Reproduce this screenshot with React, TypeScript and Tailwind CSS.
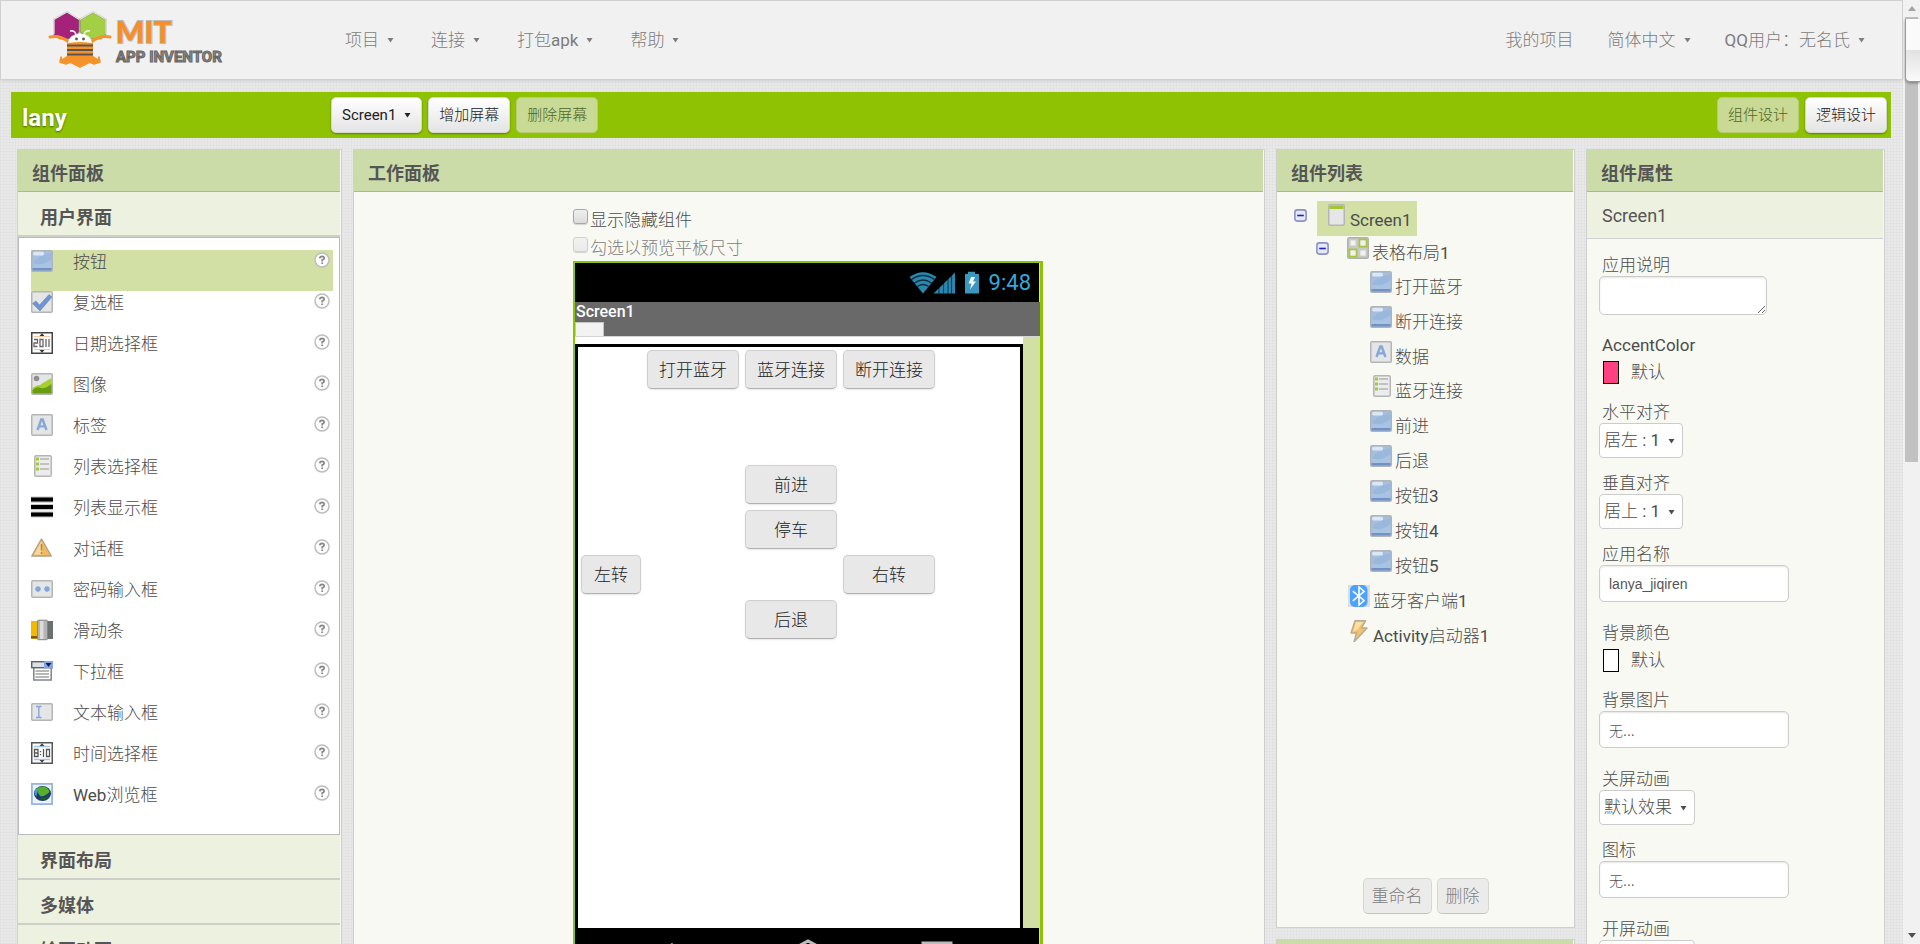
import React, { useState } from 'react';

type IconName =
  | 'button' | 'check' | 'date' | 'image' | 'label' | 'picker' | 'listview' | 'notifier'
  | 'password' | 'slider' | 'spinner' | 'textbox' | 'time' | 'web' | 'screen' | 'table'
  | 'bluetooth' | 'activity';

const Tile = ({ y = 0, h = 22 }: { y?: number; h?: number }) => (
  <rect x="0.75" y={y + 0.75} width="20.5" height={h - 1.5} rx="1" fill="#e4e5e7" stroke="#b5b5b5" strokeWidth="1.5" />
);

const glyphs: Record<IconName, React.ReactNode> = {
  button: (
    <>
      <rect x="0.75" y="0.75" width="20.5" height="20.5" rx="1.5" fill="#a5bfe0" stroke="#b0b3b8" strokeWidth="1.5" />
      <path d="M1.5 14 Q4 7 20.5 3 V18.5 H1.5 Z" fill="#9ab7dc" />
      <path d="M1.5 18.5 V13 Q11 17 20.5 9 V18.5 Z" fill="#a9c3e3" />
      <rect x="1.5" y="18" width="19" height="2.5" fill="#7192c7" />
      <rect x="2" y="1.8" width="11" height="3.6" rx="1.6" fill="#dce7f5" />
    </>
  ),
  check: (
    <>
      <Tile />
      <path d="M1.5 12.5 L5 10 L8.5 14 L18 3.5 L21 6 L9 20 Z" fill="#6f94d0" stroke="#5f83c0" strokeWidth="0.5" />
    </>
  ),
  date: (
    <>
      <rect x="0.75" y="0.75" width="20.5" height="20.5" fill="#fff" stroke="#444" strokeWidth="1.5" />
      <path d="M3 4.5 H19 M3 17.5 H19" stroke="#f5c89c" strokeWidth="1.2" />
      <path d="M11 1.2 L13.5 4 H8.5 Z M11 20.8 L13.5 18 H8.5 Z" fill="#333" />
      <path d="M3 7.5 H6.5 V11 H3 V14.5 H6.5 M9 7.5 H12 V14.5 H9 Z M15 7 V15 M18 7 V15" fill="none" stroke="#666" strokeWidth="1.3" />
    </>
  ),
  image: (
    <>
      <Tile />
      <path d="M1.5 15 Q5 12 9 12 Q13 9 20.5 5 V20.5 H1.5 Z" fill="#a4d030" />
      <path d="M1.5 17 Q6 13 10 15 Q15 16 20.5 11 V20.5 H1.5 Z" fill="#6a9c12" />
      <circle cx="5.5" cy="5.5" r="2.8" fill="#8f8f8f" />
    </>
  ),
  label: (
    <>
      <Tile />
      <path d="M6.5 16 L10.3 5.5 H11.7 L15.5 16 M8 12.4 H14" fill="none" stroke="#86a7d8" strokeWidth="2.4" />
    </>
  ),
  picker: (
    <>
      <rect x="3.75" y="0.75" width="16.5" height="20.5" rx="1.5" fill="#ececec" stroke="#b5b5b5" strokeWidth="1.5" />
      <path d="M9 4 H18 M9 9 H18 M9 14 H18" stroke="#b3b3b3" strokeWidth="1.6" />
      <path d="M5 4 H8 M5 9 H8 M5 14 H8" stroke="#a2c93a" strokeWidth="3" />
    </>
  ),
  listview: (
    <>
      <rect width="22" height="21" y="0.5" fill="#c6c6c6" />
      <path d="M0 3.5 H22 M0 11 H22 M0 18.5 H22" stroke="#000" strokeWidth="4.2" />
      <path d="M0 7.3 H22 M0 14.8 H22" stroke="#fff" strokeWidth="1.3" />
    </>
  ),
  notifier: (
    <>
      <path d="M10.5 2 L20.3 19 H0.8 Z" fill="#f0bb60" stroke="#b3a085" strokeWidth="1.4" strokeLinejoin="round" />
      <path d="M10.5 4 L3 17.8 H10.5 Z" fill="#f7d7a0" />
      <path d="M10.5 7 V13.5 M10.5 15 V17" stroke="#b08a4a" strokeWidth="1.5" />
    </>
  ),
  password: (
    <>
      <Tile y={2} h={18} />
      <path d="M4 11 H10 M7 8 V14 M5 9 L9 13 M9 9 L5 13 M13 11 H19 M16 8 V14 M14 9 L18 13 M18 9 L14 13" stroke="#83a6da" strokeWidth="1.4" />
    </>
  ),
  slider: (
    <>
      <rect x="0" y="2" width="7" height="18" fill="#f5b800" />
      <rect x="0" y="17" width="7" height="2.5" fill="#7a5b10" />
      <rect x="16" y="2" width="6" height="18" fill="#6b7070" />
      <rect x="6.5" y="1.2" width="10" height="19.5" rx="1" fill="#b4b4b4" stroke="#858585" />
      <rect x="9" y="2" width="3.5" height="18" fill="#dcdcdc" />
    </>
  ),
  spinner: (
    <>
      <rect x="2.8" y="7" width="17.4" height="13" fill="#fff" stroke="#858b96" strokeWidth="1.6" />
      <path d="M4.5 11 H18 M4.5 14 H18 M4.5 17 H18" stroke="#a0a0a0" strokeWidth="1.4" />
      <rect x="0.7" y="1.7" width="20.6" height="6" fill="#dcdfe4" stroke="#5d6269" strokeWidth="1.4" />
      <rect x="13" y="1" width="9" height="7.4" fill="#86a5e6" />
      <path d="M14.5 3 H20.5 L17.5 7 Z" fill="#10204a" />
    </>
  ),
  textbox: (
    <>
      <Tile y={2} h={18} />
      <path d="M5 5.5 H7 L7.8 6.5 L8.6 5.5 H10.5 M7.8 6 V16 M5 16.5 H7 L7.8 15.5 L8.6 16.5 H10.5" fill="none" stroke="#86a5d8" strokeWidth="1.4" />
    </>
  ),
  time: (
    <>
      <rect x="0.75" y="0.75" width="20.5" height="20.5" fill="#fff" stroke="#555" strokeWidth="1.5" />
      <path d="M3 4.5 H19 M3 17.5 H19" stroke="#9fc4e6" strokeWidth="1.4" />
      <path d="M11 1.2 L13.5 4 H8.5 Z M11 20.8 L13.5 18 H8.5 Z" fill="#444" />
      <path d="M3.5 7.5 H7 V14.5 H3.5 Z M3.5 11 H7 M9.5 9 V10.2 M9.5 12 V13.2 M12.5 7 V15 M15.5 7.5 H18.5 V14.5 H15.5 Z" fill="none" stroke="#555" strokeWidth="1.3" />
    </>
  ),
  web: (
    <>
      <rect x="0.9" y="0.9" width="20.2" height="20.2" fill="#eef3fa" stroke="#98b5de" strokeWidth="1.8" />
      <ellipse cx="11.5" cy="10.5" rx="8.5" ry="7.5" fill="#1c3c6e" />
      <path d="M5 6 Q8 3 13 3.5 Q18 5 18.5 9 Q14 14 9 13 Q7 10 5 6 Z" fill="#55b02c" />
      <path d="M3.2 9 Q4 6 6 5 Q7 9 5.5 13 Q3.5 12 3.2 9 Z" fill="#4d90dd" />
      <path d="M9 14 Q14 16 18 12 Q16 17 11 17.5 Z" fill="#1f5a22" />
    </>
  ),
  screen: (
    <>
      <rect x="3.75" y="0.75" width="15.5" height="20.5" rx="1.2" fill="#e6e6e6" stroke="#b5b5b5" strokeWidth="1.5" />
      <rect x="4.5" y="1.5" width="14" height="3.5" fill="#a3c62c" />
    </>
  ),
  table: (
    <>
      <rect x="0.75" y="0.75" width="20.5" height="20.5" rx="1.5" fill="#c9c9c9" stroke="#b0b0b0" strokeWidth="1.5" />
      <rect x="11.5" y="1.5" width="9" height="9" fill="#a7c640" />
      <rect x="1.5" y="11.5" width="9" height="9" fill="#a7c640" />
      <path d="M3.7 3.7 H8.3 V8.3 H3.7 Z M13.7 3.7 H18.3 V8.3 H13.7 Z M3.7 13.7 H8.3 V18.3 H3.7 Z M13.7 13.7 H18.3 V18.3 H13.7 Z" fill="#f4f4ee" stroke="#e4e4e4" />
    </>
  ),
  bluetooth: (
    <>
      <rect width="22" height="22" fill="#dcdcdc" />
      <rect x="2" width="17.5" height="22" rx="5" fill="#4ba3ff" />
      <path d="M4.8 6.2 L16 15.5 L11 20 V2 L16 6.5 L4.8 15.8" fill="none" stroke="#fff" strokeWidth="1.6" />
    </>
  ),
  activity: (
    <>
      <path d="M7 0.8 H17.5 L13.5 8 H19 L6 22 L8.5 13 H3 Z" fill="#f5c266" stroke="#b9aa92" strokeWidth="1.4" strokeLinejoin="round" />
      <path d="M8 2 H15 L10 9 L5 12 Z" fill="#fae0a6" />
    </>
  ),
};

const Icon = ({ name }: { name: IconName }) => (
  <svg viewBox="0 0 22 22" className="w-[22px] h-[22px] shrink-0" aria-hidden="true">
    {glyphs[name]}
  </svg>
);

const Caret = () => (
  <svg viewBox="0 0 7 6" className="w-[7px] h-[6px] shrink-0" aria-hidden="true">
    <path d="M0.5 1 H6.5 L3.5 5.5 Z" fill="currentColor" />
  </svg>
);

const Logo = () => (
  <svg viewBox="0 0 180 60" className="w-[180px] h-[60px]" role="img" aria-label="MIT App Inventor">
    <g stroke="#777" strokeOpacity="0.5" strokeWidth="1.5">
      <path d="M6 9.5 L19 2 L31 9.5 V22 L24 29 H12 L6 25 Z" fill="#a5227a" />
      <path d="M32 9.5 L45 2 L58 9.5 V24 L53 29 H41 L32 22 Z" fill="#a3cf45" />
    </g>
    <g fill="none" stroke="#f3efe9" strokeWidth="1.6">
      <path d="M6 24 V9.5 L19 2 L31 9.5 M32 9.5 L45 2 L58 9.5 V24" strokeWidth="1" />
      <path d="M22 21 Q28 20 28 26 M42 21 Q36 20 36 26" />
    </g>
    <path d="M2 27 Q12 25 21 32 M62 27 Q52 25 43 32" fill="none" stroke="#f6922a" strokeWidth="3" strokeLinecap="round" />
    <path d="M13 47 L14 50 L20 46 H44 L50 50 L51 47 L52 52 L46 54 L42 52 L32 57 L22 52 L18 54 L12 52 Z" fill="#f6922a" stroke="#f6922a" strokeWidth="1.5" strokeLinejoin="round" />
    <rect x="19" y="31" width="26" height="17" fill="#f6922a" />
    <path d="M19 35.5 H45 M19 40 H45 M19 44.5 H45" stroke="#5b5450" strokeWidth="2.2" />
    <path d="M20 33 Q21 24 32 24 Q43 24 44 33 Q32 31 20 33 Z" fill="#fff" />
    <circle cx="28.5" cy="29" r="1.4" fill="#555" />
    <circle cx="35.5" cy="29" r="1.4" fill="#555" />
    <text x="68" y="33" fontFamily="Lato, sans-serif" fontWeight="900" fontSize="30" fill="#f98e28" stroke="#bbb" strokeWidth="2" paintOrder="stroke">
      MIT
    </text>
    <text x="68" y="52" fontFamily="Roboto, sans-serif" fontWeight="700" fontSize="15" fill="#8a8a8a" stroke="#666" strokeWidth="1">
      APP INVENTOR
    </text>
  </svg>
);

const NavItem = ({ label, caret = true }: { label: string; caret?: boolean }) => (
  <button className="flex items-center gap-2 text-[17px] leading-6 text-[#7c7c7c]">
    {label}
    {caret && <Caret />}
  </button>
);

const BarButton = ({ children, disabled }: { children: React.ReactNode; disabled?: boolean }) => (
  <button
    disabled={disabled}
    className="h-9 px-[10px] flex items-center gap-2 rounded-[5px] border text-[15px] enabled:text-[#222] enabled:border-[#d4d8cc] enabled:bg-linear-to-b enabled:from-white enabled:to-[#e4e4e4] enabled:shadow-[0_1px_2px_rgba(0,0,0,0.35)] disabled:bg-[#c8da94] disabled:border-[#b5cc74] disabled:text-[#526428]"
  >
    {children}
  </button>
);

const Panel = ({ title, className, children }: { title: string; className: string; children?: React.ReactNode }) => (
  <section className={`bg-[#f8f9f3] border border-[#cfcfcf] flex flex-col ${className}`}>
    <h2 className="h-[42px] shrink-0 pt-1 px-[14px] mr-px font-[Roboto,'Noto_Sans_CJK_SC',sans-serif] text-lg leading-[40px] font-bold text-[#555] bg-[#ccdca9] border-b border-[#adb497]">
      {title}
    </h2>
    {children}
  </section>
);

const palette: { icon: IconName; name: string }[] = [
  { icon: 'button', name: '按钮' },
  { icon: 'check', name: '复选框' },
  { icon: 'date', name: '日期选择框' },
  { icon: 'image', name: '图像' },
  { icon: 'label', name: '标签' },
  { icon: 'picker', name: '列表选择框' },
  { icon: 'listview', name: '列表显示框' },
  { icon: 'notifier', name: '对话框' },
  { icon: 'password', name: '密码输入框' },
  { icon: 'slider', name: '滑动条' },
  { icon: 'spinner', name: '下拉框' },
  { icon: 'textbox', name: '文本输入框' },
  { icon: 'time', name: '时间选择框' },
  { icon: 'web', name: 'Web浏览框' },
];

const CategoryHeader = ({ name }: { name: string }) => (
  <button className="h-[45px] shrink-0 mr-px pl-[22px] pt-2 text-left font-[Roboto,'Noto_Sans_CJK_SC',sans-serif] text-lg font-bold text-[#555] bg-[#edf1df] border-b-2 border-[#cdcfc9]">
    {name}
  </button>
);

const HelpIcon = () => (
  <svg viewBox="0 0 16 16" className="w-4 h-4" aria-hidden="true">
    <circle cx="8" cy="8" r="7" fill="#fdfdfd" stroke="#bdbdbd" strokeWidth="1.5" />
    <path d="M5.8 6.3 Q6 4.4 8 4.4 Q10.3 4.5 10.1 6.3 Q9.9 7.5 8.2 8 V9.4 M8.2 10.4 V12" fill="none" stroke="#888" strokeWidth="1.8" />
  </svg>
);

const PalettePanel = () => (
  <Panel title="组件面板" className="w-[325px] shrink-0">
    <CategoryHeader name="用户界面" />
    <ul className="bg-white border border-[#bbb] mr-px pl-3 pr-[6px] pt-3 pb-[10px]">
      {palette.map((item, i) => (
        <li key={item.name} className={`h-[41px] flex items-start ${i === 0 ? 'bg-[#d2e0a6]' : ''}`}>
          <Icon name={item.icon} />
          <span className="ml-5 flex-1 text-[17px] leading-6 text-[#4c4c4c]">{item.name}</span>
          <button aria-label={`${item.name} 帮助`} className="mt-[2px] mr-[3px]">
            <HelpIcon />
          </button>
        </li>
      ))}
    </ul>
    <CategoryHeader name="界面布局" />
    <CategoryHeader name="多媒体" />
    <CategoryHeader name="绘图动画" />
  </Panel>
);

const MockButton = ({ label, className }: { label: string; className: string }) => (
  <button
    className={`rounded-[5px] border border-[#cfcfcf] border-b-[#b0b0b0] bg-[#e8e8e8] text-[17px] leading-6 text-[#222] shadow-[0_1px_2px_rgba(0,0,0,0.1)] ${className}`}
  >
    {label}
  </button>
);

const checkboxClass =
  'appearance-none w-[15px] h-[15px] mt-1 rounded-[3px] border border-[#a8a8a8] bg-linear-to-b from-[#efefef] to-[#dcdcdc] shadow-[0_1px_1px_rgba(0,0,0,0.15)] checked:bg-[#8fc202] disabled:border-[#d0d0d0] disabled:from-[#f2f2f2] disabled:to-[#eaeaea]';

const Phone = () => (
  <div className="bg-[#d2e0a6] border-t-2 border-l-2 border-r-3 border-[#8fc202]">
    <div className="h-[39px] mr-px bg-black flex items-center justify-end pr-2 gap-[10px]">
      <svg viewBox="0 0 70 24" className="w-[70px] h-6" aria-hidden="true">
        <path d="M14 22.5 L0.5 6 Q14 -3.5 27.5 6 Z" fill="#2a87b0" />
        <path d="M2.5 8.5 Q14 0.5 25.5 8.5 M5.5 12 Q14 6 22.5 12 M8.5 15.5 Q14 11.5 19.5 15.5" fill="none" stroke="#000" strokeOpacity="0.65" strokeWidth="1.5" />
        <path d="M24.5 22.5 L46 1.5 V22.5 Z" fill="#2a87b0" />
        <path d="M30 15 V23 M34.5 11 V23 M39 7 V23 M42.5 4 V23" stroke="#000" strokeOpacity="0.5" strokeWidth="1.2" />
        <path d="M56 3 H59 V0.8 H66 V3 H70 V22.5 H56 Z" fill="#3a97bd" />
        <path d="M62 6 H66 L64 10.5 H67 L61 18.5 L62.5 12.5 H59.5 Z" fill="#f0f8fb" />
      </svg>
      <span className="text-[22px] leading-none text-[#33a9dc]">9:48</span>
    </div>
    <div className="h-[35px] bg-[#696969] border-b border-[#d4d4d4]">
      <div className="h-5 leading-5 px-px text-base font-medium text-white">Screen1</div>
      <div className="w-[29px] h-[14px] bg-[#f2f2f2] border-t border-x border-[#c4c4c4] flex items-end justify-center text-[10px] leading-[10px] text-white">
        .
      </div>
    </div>
    <div className="mr-[17px] h-[591px] pt-[7px] bg-white">
      <div className="h-full p-[3px] bg-white border-3 border-b-0 border-black">
        <div className="grid grid-cols-[60px_92px_92px_92px] grid-rows-[39px_64px_39px_39px_39px_39px] gap-[6px]">
          <MockButton label="打开蓝牙" className="col-start-2 row-start-1" />
          <MockButton label="蓝牙连接" className="col-start-3 row-start-1" />
          <MockButton label="断开连接" className="col-start-4 row-start-1" />
          <MockButton label="前进" className="col-start-3 row-start-3" />
          <MockButton label="停车" className="col-start-3 row-start-4" />
          <MockButton label="左转" className="col-start-1 row-start-5" />
          <MockButton label="右转" className="col-start-4 row-start-5" />
          <MockButton label="后退" className="col-start-3 row-start-6" />
        </div>
      </div>
    </div>
    <div className="mr-px bg-black">
      <svg viewBox="0 0 464 48" className="w-full h-12" fill="none" stroke="#bbb" strokeWidth="3" aria-hidden="true">
        <path d="M98 16 L84 27 L98 38 M86 27 H114" />
        <path d="M216 22 L233 13 L250 22 V36 H216 Z" />
        <path d="M348 15 H376 V30 H348 Z" />
      </svg>
    </div>
  </div>
);

const WorkPanel = () => {
  const [showHidden, setShowHidden] = useState(false);

  return (
    <Panel title="工作面板" className="flex-1 min-w-0">
      <div className="w-[472px] mx-auto pt-[13px] pr-[2px]">
        <label className="h-7 flex items-start gap-[2px] text-[17px] leading-[30px] text-[#4c4c4c]">
          <input type="checkbox" className={checkboxClass} checked={showHidden} onChange={(e) => setShowHidden(e.target.checked)} />
          显示隐藏组件
        </label>
        <label className="h-7 flex items-start gap-[2px] text-[17px] leading-[30px] text-[#808080]">
          <input type="checkbox" className={checkboxClass} disabled />
          勾选以预览平板尺寸
        </label>
        <Phone />
      </div>
    </Panel>
  );
};

const treeLeaves: { icon: IconName; name: string }[] = [
  { icon: 'button', name: '打开蓝牙' },
  { icon: 'button', name: '断开连接' },
  { icon: 'label', name: '数据' },
  { icon: 'picker', name: '蓝牙连接' },
  { icon: 'button', name: '前进' },
  { icon: 'button', name: '后退' },
  { icon: 'button', name: '按钮3' },
  { icon: 'button', name: '按钮4' },
  { icon: 'button', name: '按钮5' },
];

const Collapse = () => (
  <button aria-label="折叠" className="block w-[13px] h-[13px]">
    <svg viewBox="0 0 13 13" className="w-full h-full" aria-hidden="true">
      <rect x="0.9" y="0.9" width="11.2" height="11.2" rx="2.5" fill="#e6e8f6" stroke="#8a93c6" strokeWidth="1.6" />
      <path d="M3.2 6.5 H9.8" stroke="#1f1fc8" strokeWidth="1.6" />
    </svg>
  </button>
);

const TreeNode = ({ icon, name }: { icon: IconName; name: string }) => (
  <div className={`flex items-start gap-[3px] ${icon === 'label' || icon === 'table' ? 'h-[34px]' : 'h-[35px]'}`}>
    <Icon name={icon} />
    <span className="pt-1 leading-6">{name}</span>
  </div>
);

const TreePanel = () => (
  <div className="w-[299px] shrink-0 flex flex-col gap-[11px]">
    <Panel title="组件列表" className="h-[779px] shrink-0">
      <div className="flex-1 pt-[9px] pl-[17px] text-[17px] text-[#4c4c4c]">
        <div className="flex items-start gap-[10px]">
          <div className="pt-2">
            <Collapse />
          </div>
          <div className="h-[35px] pl-2 pr-[5px] pt-[3px] flex items-start gap-[3px] bg-[#d2e0a6]">
            <Icon name="screen" />
            <span className="pt-1 leading-6">Screen1</span>
          </div>
        </div>
        <div className="pt-px pl-[22px]">
          <div className="flex items-start gap-[18px]">
            <div className="pt-[5px]">
              <Collapse />
            </div>
            <TreeNode icon="table" name="表格布局1" />
          </div>
          <div className="pl-[54px]">
            {treeLeaves.map((leaf) => (
              <TreeNode key={leaf.name} icon={leaf.icon} name={leaf.name} />
            ))}
          </div>
          <div className="pl-8">
            <TreeNode icon="bluetooth" name="蓝牙客户端1" />
            <TreeNode icon="activity" name="Activity启动器1" />
          </div>
        </div>
      </div>
      <div className="flex justify-center gap-[5px] pb-[13px]">
        {['重命名', '删除'].map((label) => (
          <button
            key={label}
            disabled
            className="h-9 px-2 rounded-[5px] border border-[#d6d8d2] border-b-[#c4c4c4] bg-[#ebebea] text-[17px] leading-6 text-[#808080]"
          >
            {label}
          </button>
        ))}
      </div>
    </Panel>
    <Panel title="素材" className="shrink-0" />
  </div>
);

const Field = ({ label, id, children }: { label: string; id: string; children: React.ReactNode }) => (
  <div>
    <label htmlFor={id} className="block pl-[3px] leading-[22px]">
      {label}
    </label>
    {children}
  </div>
);

const TextField = ({ label, id, value }: { label: string; id: string; value: string }) => (
  <div className="mb-5">
    <Field label={label} id={id}>
      <input
        id={id}
        type="text"
        defaultValue={value}
        className="block w-[190px] h-[37px] px-[9px] rounded-[5px] border border-[#ccc] bg-white text-sm text-[#555] shadow-[inset_0_1px_2px_rgba(0,0,0,0.1)] font-['Liberation_Sans','Noto_Sans_CJK_SC_Light','Noto_Sans_CJK_SC',sans-serif]"
      />
    </Field>
  </div>
);

const SelectField = ({ label, id, value, className }: { label: string; id: string; value: string; className: string }) => (
  <div className="mb-[14px]">
    <Field label={label} id={id}>
      <div className={`relative ${className}`}>
        <select id={id} className="appearance-none block w-full h-[35px] pl-1 rounded-[4px] border border-[#ccc] bg-white text-[17px]">
          <option>{value}</option>
        </select>
        <span className="absolute right-2 inset-y-0 flex items-center pointer-events-none">
          <Caret />
        </span>
      </div>
    </Field>
  </div>
);

const ColorField = ({ label, id, swatch }: { label: string; id: string; swatch: string }) => (
  <div className="mb-[14px]">
    <Field label={label} id={id}>
      <button id={id} className="h-[31px] pt-[2px] pl-1 flex items-center gap-3">
        <span className={`w-4 h-[23px] border border-black ${swatch}`} />
        默认
      </button>
    </Field>
  </div>
);

const PropertiesPanel = () => (
  <Panel title="组件属性" className="w-[299px] shrink-0">
    <div className="h-[47px] shrink-0 mr-px px-[15px] text-lg leading-[48px] text-[#555] bg-[#edf1df] border-b border-[#d0d0d0]">
      Screen1
    </div>
    <div className="pt-[15px] pl-3 text-[17px] text-[#4c4c4c]">
      <div className="mb-[19px]">
        <Field label="应用说明" id="about">
          <textarea
            id="about"
            className="block w-[168px] h-[39px] rounded-[5px] border border-[#ccc] bg-white shadow-[inset_0_1px_2px_rgba(0,0,0,0.1)]"
          />
        </Field>
      </div>
      <ColorField label="AccentColor" id="accent" swatch="bg-[#ff4081]" />
      <SelectField label="水平对齐" id="halign" value="居左 : 1" className="w-[84px]" />
      <SelectField label="垂直对齐" id="valign" value="居上 : 1" className="w-[84px]" />
      <TextField label="应用名称" id="app-name" value="lanya_jiqiren" />
      <ColorField label="背景颜色" id="bg-color" swatch="bg-white" />
      <TextField label="背景图片" id="bg-image" value="无..." />
      <SelectField label="关屏动画" id="close-anim" value="默认效果" className="w-24" />
      <TextField label="图标" id="icon" value="无..." />
      <SelectField label="开屏动画" id="open-anim" value="默认效果" className="w-24" />
    </div>
  </Panel>
);

const PageScrollbar = () => (
  <div className="w-[17px] shrink-0 bg-[#f1f1f1] flex flex-col items-center justify-between relative">
    <div className="w-[13px]">
      <div className="h-[17px] flex items-center justify-center">
        <svg viewBox="0 0 8 5" className="w-2 h-[5px]" aria-hidden="true">
          <path d="M0 5 L4 0 L8 5 Z" fill="#a3a3a3" />
        </svg>
      </div>
      <div className="h-[445px] bg-[#c1c1c1]" />
    </div>
    <div className="h-[17px] flex items-center">
      <svg viewBox="0 0 8 5" className="w-2 h-[5px]" aria-hidden="true">
        <path d="M0 0 L4 5 L8 0 Z" fill="#505050" />
      </svg>
    </div>
    {/* floating tab docked to the window edge */}
    <div className="absolute top-[19px] right-0 w-[15px] h-[63px] rounded-bl-[5px] border-l border-b border-[#999] bg-[linear-gradient(#fafafa_50%,#e2e2e2_50%,#fafafa)] shadow-[0_1px_3px_rgba(0,0,0,0.4)]" />
  </div>
);

const App: React.FC = () => {
  return (
    <div className="h-screen overflow-hidden flex font-[Roboto,'Noto_Sans_CJK_SC_Light','Noto_Sans_CJK_SC',sans-serif]">
      <div className="flex-1 min-w-0 overflow-hidden bg-[#e9e9e9] bg-[repeating-linear-gradient(0deg,rgba(0,0,0,0.025)_0_1px,transparent_1px_3px),repeating-linear-gradient(90deg,rgba(0,0,0,0.025)_0_1px,transparent_1px_3px)]">
        <header className="h-20 pl-[47px] pr-[37px] flex items-center bg-[#f1f1f1] border border-[#d0d0d0] shadow-[0_1px_3px_rgba(0,0,0,0.1)]">
          <Logo />
          <nav className="ml-[117px] flex gap-[37px]">
            <NavItem label="项目" />
            <NavItem label="连接" />
            <NavItem label="打包apk" />
            <NavItem label="帮助" />
          </nav>
          <nav className="ml-auto flex gap-[34px]">
            <NavItem label="我的项目" caret={false} />
            <NavItem label="简体中文" />
            <NavItem label="QQ用户：无名氏" />
          </nav>
        </header>

        <div className="mt-3 ml-[11px] mr-3 h-[46px] pl-[11px] pr-1 flex items-center bg-[#8fc202]">
          <h1 className="w-[309px] pt-[6px] text-2xl font-bold text-white [text-shadow:0_1px_2px_rgba(0,0,0,0.5)]">lany</h1>
          <div className="flex gap-[6px]">
            <BarButton>
              Screen1 <Caret />
            </BarButton>
            <BarButton>增加屏幕</BarButton>
            <BarButton disabled>删除屏幕</BarButton>
          </div>
          <div className="ml-auto flex gap-[6px]">
            <BarButton disabled>组件设计</BarButton>
            <BarButton>逻辑设计</BarButton>
          </div>
        </div>

        <main className="mt-[11px] pl-[17px] pr-[18px] flex items-start gap-[11px]">
          <PalettePanel />
          <WorkPanel />
          <TreePanel />
          <PropertiesPanel />
        </main>
      </div>
      <PageScrollbar />
    </div>
  );
};

export default App;
